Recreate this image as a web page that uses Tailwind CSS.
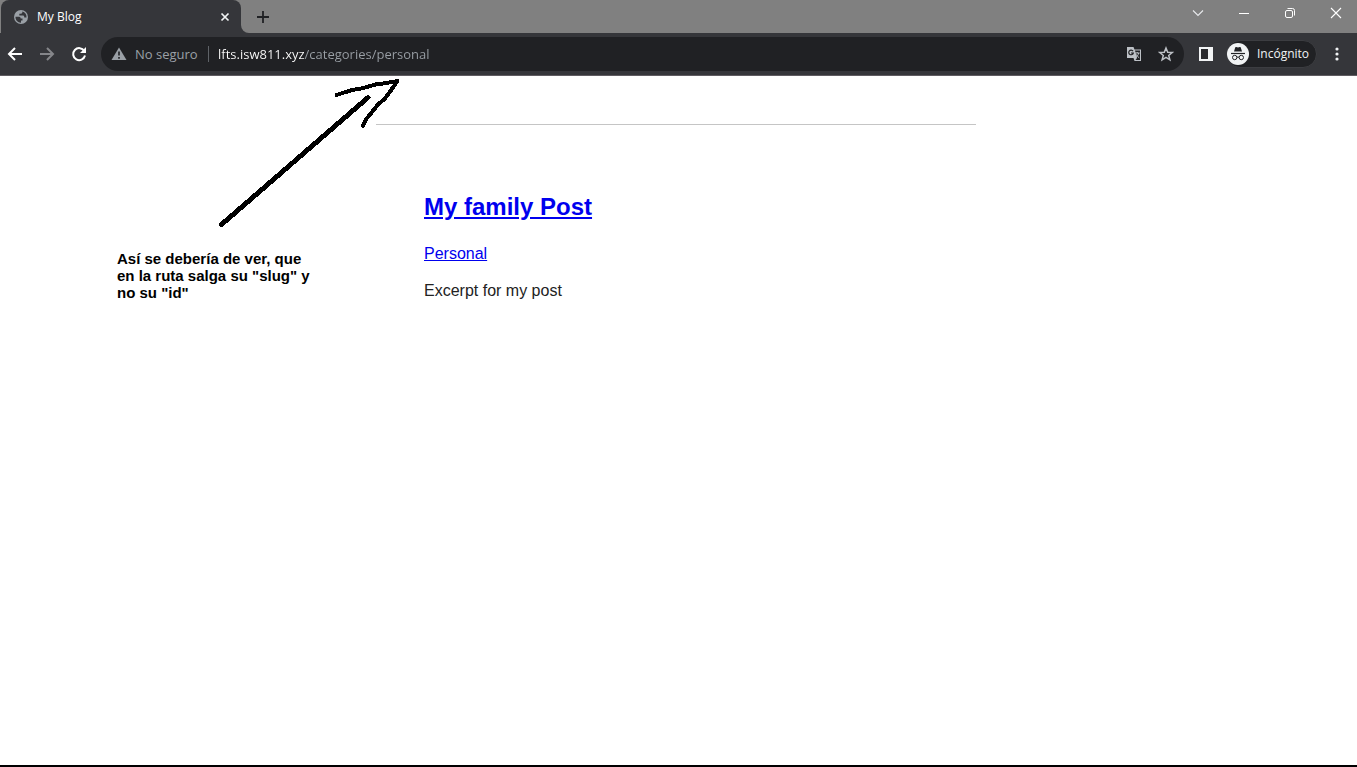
<!DOCTYPE html>
<html lang="es">
<head>
<meta charset="utf-8">
<title>My Blog</title>
<script src="https://cdn.jsdelivr.net/npm/@tailwindcss/browser@4"></script>
</head>
<body class="flex min-h-screen flex-col border-b-2 border-black bg-white font-['Liberation_Sans',Arial,sans-serif]">
<header class="font-['Open_Sans',sans-serif]">
  <div class="flex h-[33px] items-start justify-between bg-[#35363a]">
    <div class="flex h-full w-[241px] shrink-0 bg-[#808080] pl-px">
      <div class="flex w-full items-center rounded-tl-lg rounded-tr-lg bg-[#35363a] pr-2 pl-3">
        <svg class="size-4 shrink-0" viewBox="0 0 16 16" aria-hidden="true"><circle cx="8" cy="8" r="7" fill="#9aa0a6"/><path d="M2.500 7.800h3.700q1.500.2 1.500 1.700h1.800v2H8v2.200C4.800 13.800 2.300 11 2.500 7.800ZM9.300 2.500v1.300q-.3 1-1.800 1H6.300v1.800h4q1 .2 1 1.800h2.200c.3-2.900-1.500-5.300-4.200-5.900Z" fill="#35363a"/></svg>
        <span class="ml-2 flex-1 text-xs text-white">My Blog</span>
        <button class="grid size-4 place-items-center" aria-label="Cerrar pestaña"><svg class="size-4" viewBox="0 0 16 16" fill="none" stroke="#f1f3f4" stroke-width="1.7"><path d="m4.500 4.500 7 7m0-7-7 7"/></svg></button>
      </div>
    </div>
    <div class="flex h-full flex-1 items-center justify-between rounded-bl-lg bg-[#808080]">
      <button class="ml-3 size-5" aria-label="Nueva pestaña"><svg viewBox="0 0 20 20" fill="none" stroke="#202124" stroke-width="1.800"><path d="M10 4v12M4 10h12"/></svg></button>
      <div class="-mr-0.5 flex pb-[7px]">
        <button class="grid h-[26px] w-[46px] place-items-center" aria-label="Buscar pestañas"><svg class="size-4" viewBox="0 0 16 16" fill="none" stroke="#e8eaed" stroke-width="1.100"><path d="m3 5.500 5 5 5-5"/></svg></button>
        <button class="grid h-[26px] w-[46px] place-items-center" aria-label="Minimizar"><svg class="size-4" viewBox="0 0 16 16" fill="none" stroke="#fff"><path d="M3 8.500h10"/></svg></button>
        <button class="grid h-[26px] w-[46px] place-items-center" aria-label="Restaurar"><svg class="size-4" viewBox="0 0 16 16" fill="none" stroke="#fff"><rect x="3.500" y="5.500" width="7" height="7" rx="1.500"/><path d="M5.500 3.500h5a2 2 0 0 1 2 2v5"/></svg></button>
        <button class="grid h-[26px] w-[46px] place-items-center" aria-label="Cerrar"><svg class="size-4" viewBox="0 0 16 16" fill="none" stroke="#fff" stroke-width="1.100"><path d="m3 3 10 10m0-10L3 13"/></svg></button>
      </div>
    </div>
  </div>
  <nav class="flex h-[43px] items-center border-b border-[#5f5c61] bg-[#35363a] pl-[5px]">
    <button class="size-5" aria-label="Atrás"><svg viewBox="0 0 20 20" fill="none" stroke="#fff" stroke-width="2"><path d="M17 10H4m6-6-6 6 6 6"/></svg></button>
    <button class="ml-3 size-5" aria-label="Adelante"><svg viewBox="0 0 20 20" fill="none" stroke="#85868a" stroke-width="2"><path d="M3 10h13m-6-6 6 6-6 6"/></svg></button>
    <button class="ml-3 size-5" aria-label="Recargar"><svg viewBox="0 0 20 20" fill="none" stroke="#fff" stroke-width="2"><path d="M15.300 7A6 6 0 1 0 16 11.500"/><path d="M17 3v6h-6Z" fill="#fff" stroke="none"/></svg></button>
    <div class="ml-3 flex h-[34px] flex-1 items-center rounded-full bg-[#202124] pr-2.5 pl-2.5 text-[13px]">
      <svg class="size-4 shrink-0" viewBox="0 0 16 16" aria-hidden="true"><path d="M8 1.500 15.500 14H.5Z" fill="#9aa0a6"/><path d="M8 5.500v4m0 1.500v1.800" stroke="#202124" stroke-width="1.600"/></svg>
      <label for="url" class="ml-2 w-[65px] pt-0.5 whitespace-nowrap text-[#9aa0a6]">No seguro</label>
      <span class="ml-2 h-4 w-px bg-[#5f6368]"></span>
      <input id="url" type="text" value="lfts.isw811.xyz/categories/personal" class="ml-[9px] min-w-0 flex-1 bg-[linear-gradient(to_right,#fff_86px,#9aa0a6_86px)] bg-clip-text pt-0.5 text-transparent caret-white outline-none">
      <button class="size-4" aria-label="Traducir esta página"><svg viewBox="0 0 16 16"><path d="M1 1h6.500l1 2.500H15V15H8.500l-1-3H1Z" fill="#bdc1c6"/><path d="M9 4.500h5V14H9.500l1.500-2Z" fill="#202124"/><path d="M7 5.200A2.300 2.300 0 1 0 7.300 7H5" fill="none" stroke="#202124" stroke-width="1.200"/><path d="M8.700 7h5m-2.500-1v1m1.500 0c-.4 2-1.500 3.300-3 4.500m0-3.500c.8 1.500 2 2.500 3.500 3.800" fill="none" stroke="#bdc1c6"/></svg></button>
      <button class="ml-4 size-4" aria-label="Añadir a marcadores"><svg viewBox="0 0 16 16" fill="none" stroke="#bdc1c6" stroke-width="1.500"><path d="m8 2 1.700 4.200 4.500.3-3.500 2.900 1.200 4.400L8 11.400l-3.900 2.400 1.200-4.400-3.500-2.900 4.500-.3Z"/></svg></button>
    </div>
    <button class="ml-3.5 size-4" aria-label="Panel lateral"><svg viewBox="0 0 16 16"><path d="M1 1h14v14H1Z" fill="#f1f3f4"/><path d="M3 3h7v10H3Z" fill="#292a2d"/></svg></button>
    <button class="ml-3 flex h-7 w-[91px] items-center rounded-full border border-[#3c3d41] bg-[#202124] text-xs text-[#f1f3f4]">
      <svg class="size-[22px] shrink-0" viewBox="0 0 22 22" aria-hidden="true"><circle cx="11" cy="11" r="11" fill="#f1f3f4"/><path d="M7 8.500 8.200 4.500q.3-.8 1-.5l1.800.5 1.800-.5q.7-.3 1 .5L15 8.500Z" fill="#202124"/><path d="M4 10.500h14" stroke="#202124" stroke-width="1.200"/><g fill="none" stroke="#202124"><circle cx="7.700" cy="14.500" r="2.200"/><circle cx="14.300" cy="14.500" r="2.200"/><path d="M9.900 14.300q1.100-.7 2.200 0"/></g></svg>
      <span class="ml-2">Incógnito</span>
    </button>
    <button class="mr-3 ml-3 size-4" aria-label="Menú"><svg viewBox="0 0 16 16" fill="#f1f3f4"><circle cx="8" cy="3" r="1.600"/><circle cx="8" cy="8" r="1.600"/><circle cx="8" cy="13" r="1.600"/></svg></button>
  </nav>
</header>
<main class="relative flex-1 pt-12 pr-[5px] text-base text-[#222]">
  <article class="mx-auto max-w-[600px] border-t border-[#c5c5c5] px-12 pt-[68px]">
    <h1 class="text-2xl leading-7 font-bold"><a href="#post" class="text-[#0000ee] underline">My family Post</a></h1>
    <p class="mt-[23px] leading-5"><a href="#personal" class="text-[#0000ee] underline">Personal</a></p>
    <p class="mt-[17px] leading-5">Excerpt for my post</p>
  </article>
  <svg class="absolute top-0 left-[200px] h-[160px] w-[220px]" viewBox="200 76 220 160" fill="none" stroke="#000" stroke-width="5" stroke-linecap="round" stroke-linejoin="round" shape-rendering="crispEdges" aria-hidden="true"><path d="M221.500 224.500 368 97.500"/><path stroke-width="4" d="m336.500 95 9-3 7-2 11-2 12-3.500 11-1.500 11-2-7 10-6 8-7 6-7 9-5 6-2.500 6"/></svg>
  <p class="absolute top-[174px] left-[117px] w-[200px] text-[15px] leading-[17px] font-bold text-black">Así se debería de ver, que en la ruta salga su "slug" y no su "id"</p>
</main>
</body>
</html>
